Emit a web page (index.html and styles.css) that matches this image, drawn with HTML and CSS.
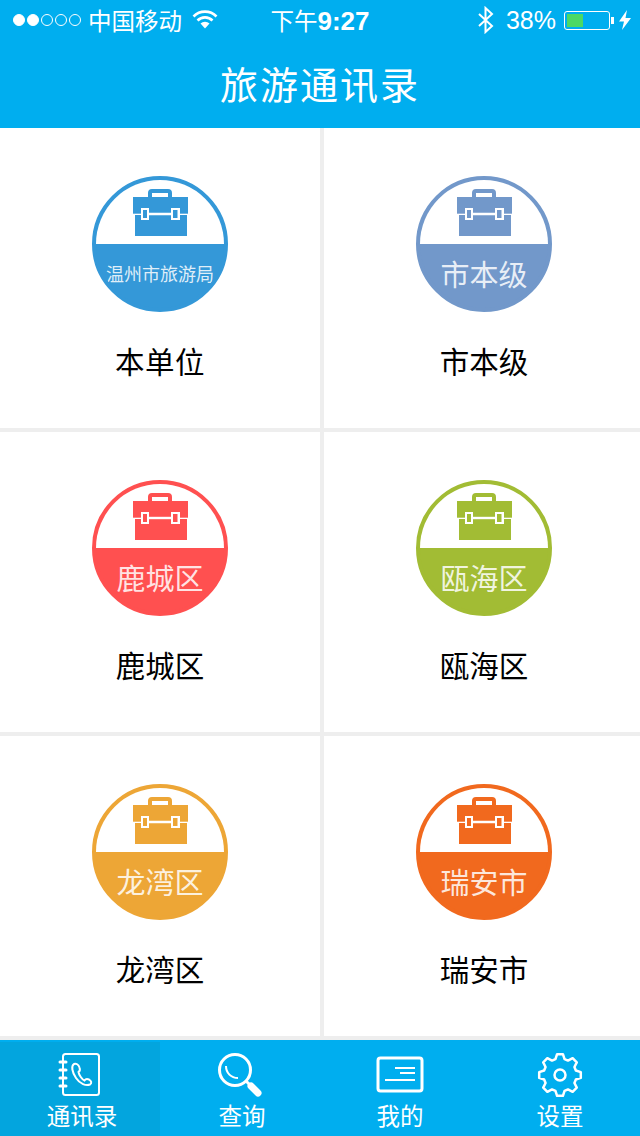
FILE: index.html
```html
<!DOCTYPE html>
<html>
<head>
<meta charset="utf-8">
<title>旅游通讯录</title>
<link rel="stylesheet" href="styles.css">
</head>
<body>
<svg class="defs" width="0" height="0">
	<symbol id="toolbox" viewBox="0 0 56 50">
		<path fill-rule="evenodd" d="M16 9V5Q16 1 20 1H36Q40 1 40 5V9H36V5H20V9Z"/>
		<path d="M1 9H56V26H1Z"/>
		<path d="M3 27H55V48H3Z"/>
		<path d="M1 26H9M48 26H56" stroke="#fff" stroke-opacity="0.6" stroke-width="1"/>
		<path d="M17 24.800H39V27.200H17Z" fill="#fff"/>
		<path d="M9 20H17V32H9ZM39 20H48V32H39Z" fill="#fff"/>
		<path d="M11 22H15V30H11ZM41 22H45.500V30H41Z"/>
	</symbol>
</svg>

<div class="status">
	<div class="status-left">
		<span class="dot on"></span><span class="dot on"></span><span class="dot"></span><span class="dot"></span><span class="dot"></span>
		<span class="carrier">中国移动</span>
		<svg class="wifi" width="26" height="20" viewBox="0 0 26 20"><path d="M1.500 6.500A16 16 0 0 1 24.500 6.500M5.500 10.500A10.500 10.500 0 0 1 20.500 10.500" fill="none" stroke="#fff" stroke-width="2.600"/><path d="M8.500 13.500A6.500 6.500 0 0 1 17.500 13.500L13 18.500Z" fill="#fff"/></svg>
	</div>
	<div class="status-time">下午<b>9:27</b></div>
	<div class="status-right">
		<svg class="bt" width="18" height="28" viewBox="0 0 18 28"><path d="M2 8L15 20L8.500 26V2L15 8L2 20" fill="none" stroke="#fff" stroke-width="2"/></svg>
		<span class="percent">38%</span>
		<div class="battery"><div class="battery-fill"></div></div>
		<div class="battery-tip"></div>
		<svg class="bolt" width="12" height="20" viewBox="0 0 12 20"><path d="M8 0L0 11.500H5L3 20L12 8H6.500Z" fill="#fff"/></svg>
	</div>
</div>

<div class="title">旅游通讯录</div>

<div class="grid">
	<div class="cell">
		<div class="badge blue">
			<div class="badge-top"><svg class="box"><use href="#toolbox"/></svg></div>
			<div class="badge-bottom small">温州市旅游局</div>
		</div>
		<div class="name wide">本单位</div>
	</div>
	<div class="cell">
		<div class="badge steel">
			<div class="badge-top"><svg class="box"><use href="#toolbox"/></svg></div>
			<div class="badge-bottom">市本级</div>
		</div>
		<div class="name">市本级</div>
	</div>
	<div class="cell">
		<div class="badge red">
			<div class="badge-top"><svg class="box"><use href="#toolbox"/></svg></div>
			<div class="badge-bottom">鹿城区</div>
		</div>
		<div class="name">鹿城区</div>
	</div>
	<div class="cell">
		<div class="badge olive">
			<div class="badge-top"><svg class="box"><use href="#toolbox"/></svg></div>
			<div class="badge-bottom">瓯海区</div>
		</div>
		<div class="name">瓯海区</div>
	</div>
	<div class="cell">
		<div class="badge amber">
			<div class="badge-top"><svg class="box"><use href="#toolbox"/></svg></div>
			<div class="badge-bottom">龙湾区</div>
		</div>
		<div class="name">龙湾区</div>
	</div>
	<div class="cell">
		<div class="badge orange">
			<div class="badge-top"><svg class="box"><use href="#toolbox"/></svg></div>
			<div class="badge-bottom">瑞安市</div>
		</div>
		<div class="name">瑞安市</div>
	</div>
</div>

<div class="tabs">
	<div class="tab active shift">
		<svg class="tab-icon" width="44" height="46" viewBox="0 0 44 46">
			<rect x="5" y="2" width="36" height="41" rx="2.500" fill="none" stroke="#fff" stroke-width="2"/>
			<path d="M2 10H8M2 18H8M2 26H8M2 34H8" stroke="#fff" stroke-width="3" stroke-linecap="round"/>
			<path d="M16 12C13 14 14 20 18 26C22 32 28 34 32 32.500C34 31 33.500 29 31 27.500C29 26.500 27.500 27 26.500 28.500C24 27.500 21 23 20.500 20C22 19 22.500 18 21.500 15.500C20.500 12.500 18 11 16 12Z" fill="none" stroke="#fff" stroke-width="2"/>
		</svg>
		<span>通讯录</span>
	</div>
	<div class="tab shift">
		<svg class="tab-icon" width="46" height="46" viewBox="0 0 46 46">
			<circle cx="18" cy="18" r="15.500" fill="none" stroke="#fff" stroke-width="3"/>
			<path d="M9 14C9 21 14 26 21 26" fill="none" stroke="#fff" stroke-width="2"/>
			<path d="M29 29L33 33" stroke="#fff" stroke-width="3"/>
			<path d="M34 34L41 41" stroke="#fff" stroke-width="7" stroke-linecap="round"/>
		</svg>
		<span>查询</span>
	</div>
	<div class="tab">
		<svg class="tab-icon" width="48" height="46" viewBox="0 0 48 46">
			<rect x="2" y="6" width="44" height="33" rx="2.500" fill="none" stroke="#fff" stroke-width="3"/>
			<path d="M19 16H39M24 21H39M9 28H39" stroke="#fff" stroke-width="2"/>
		</svg>
		<span>我的</span>
	</div>
	<div class="tab">
		<svg class="tab-icon" width="46" height="46" viewBox="0 0 46 46">
			<path d="M18.450 7.140L20.080 2.200H25.920L27.550 7.140L31 8.570L35.640 6.230L39.770 10.360L37.430 15L38.860 18.450L43.800 20.080V25.920L38.860 27.550L37.430 31L39.770 35.640L35.640 39.770L31 37.430L27.550 38.860L25.920 43.800H20.080L18.450 38.860L15 37.430L10.360 39.770L6.230 35.640L8.570 31L7.140 27.550L2.200 25.920V20.080L7.140 18.450L8.570 15L6.230 10.360L10.360 6.230L15 8.570Z" fill="none" stroke="#fff" stroke-width="2.500" stroke-linejoin="round"/>
			<circle cx="23" cy="23" r="5.500" fill="none" stroke="#fff" stroke-width="2.500"/>
		</svg>
		<span>设置</span>
	</div>
</div>
</body>
</html>
```

FILE: styles.css
```css
* {
	box-sizing: border-box;
}

html, body {
	margin: 0;
	padding: 0;
}

body {
	width: 640px;
	height: 1136px;
	overflow: hidden;
	background: #eeeeee;
	font-family: "Noto Sans CJK SC", "Liberation Sans", sans-serif;
}

.defs {
	display: block;
	height: 0;
}

/* status bar */
.status {
	height: 40px;
	background: #00aeef;
	color: #fff;
	display: grid;
	grid-template-columns: 1fr auto 1fr;
	align-items: center;
	font-size: 23.500px;
	padding: 0 9px 0 13px;
}

.status-left, .status-right {
	display: flex;
	align-items: center;
}

.status-right {
	justify-content: flex-end;
}

.dot {
	width: 12px;
	height: 12px;
	margin-right: 2px;
	border-radius: 50%;
	border: 1px solid #fff;
}

.dot.on {
	background: #fff;
}

.carrier {
	margin-left: 5px;
}

.wifi {
	margin-left: 10px;
}

.status-time {
	margin-left: -4px;
	margin-top: -1px;
}

.status-time b {
	font-family: "Liberation Sans", sans-serif;
	font-size: 26px;
}

.percent {
	font-family: "Liberation Sans", sans-serif;
	font-size: 25px;
	margin-left: 11px;
}

.battery {
	width: 46px;
	height: 19px;
	margin-left: 8px;
	border: 1px solid #fff;
	border-radius: 3px;
	padding: 2px;
}

.battery-fill {
	width: 16px;
	height: 100%;
	background: #4cd964;
}

.battery-tip {
	width: 3px;
	height: 7px;
	margin-left: 1px;
	background: #fff;
}

.bolt {
	margin-left: 5px;
}

/* header */
.title {
	height: 88px;
	background: #00aeef;
	color: #fff;
	font-size: 38px;
	letter-spacing: 2px;
	line-height: 86px;
	text-align: center;
}

/* grid of units */
.grid {
	display: grid;
	grid-template-columns: 320px 320px;
	grid-auto-rows: 300px;
	gap: 4px;
}

.cell {
	background: #fff;
	display: flex;
	flex-direction: column;
	align-items: center;
	padding-top: 48px;
}

.badge {
	width: 136px;
	height: 136px;
	border-radius: 50%;
	border: 4px solid var(--c);
	background: var(--c);
	overflow: hidden;
	color: var(--c);
	display: flex;
	flex-direction: column;
}

.badge-top {
	height: 64px;
	background: #fff;
	display: flex;
	justify-content: center;
	padding-top: 8px;
}

.box {
	width: 56px;
	height: 50px;
	fill: currentColor;
}

.badge-bottom {
	flex: 1;
	color: rgba(255, 255, 255, 0.85);
	font-size: 29px;
	line-height: 58px;
	text-align: center;
	white-space: nowrap;
}

.badge-bottom.small {
	font-size: 18px;
}

.blue { --c: #3498d8; }
.steel { --c: #7298ca; }
.red { --c: #ff5050; }
.olive { --c: #a2bc34; }
.amber { --c: #eda636; }
.orange { --c: #f1691e; }

.name {
	margin-top: 26px;
	font-size: 29.500px;
	line-height: 44px;
	color: #000;
}

.name.wide {
	letter-spacing: 0.500px;
}

/* bottom tabs */
.tabs {
	margin-top: 4px;
	height: 96px;
	background: #00aeef;
	display: grid;
	grid-template-columns: repeat(4, 160px);
}

.tab {
	color: #fff;
	font-size: 23.500px;
	line-height: 30px;
	display: flex;
	flex-direction: column;
	align-items: center;
	gap: 2px;
	padding-top: 12px;
}

.tab.active {
	background: #03a5de;
	margin-top: 2px;
	padding-top: 10px;
}

.tab.shift span {
	margin-left: 4px;
}

.tab-icon {
	display: block;
	height: 46px;
}
```
